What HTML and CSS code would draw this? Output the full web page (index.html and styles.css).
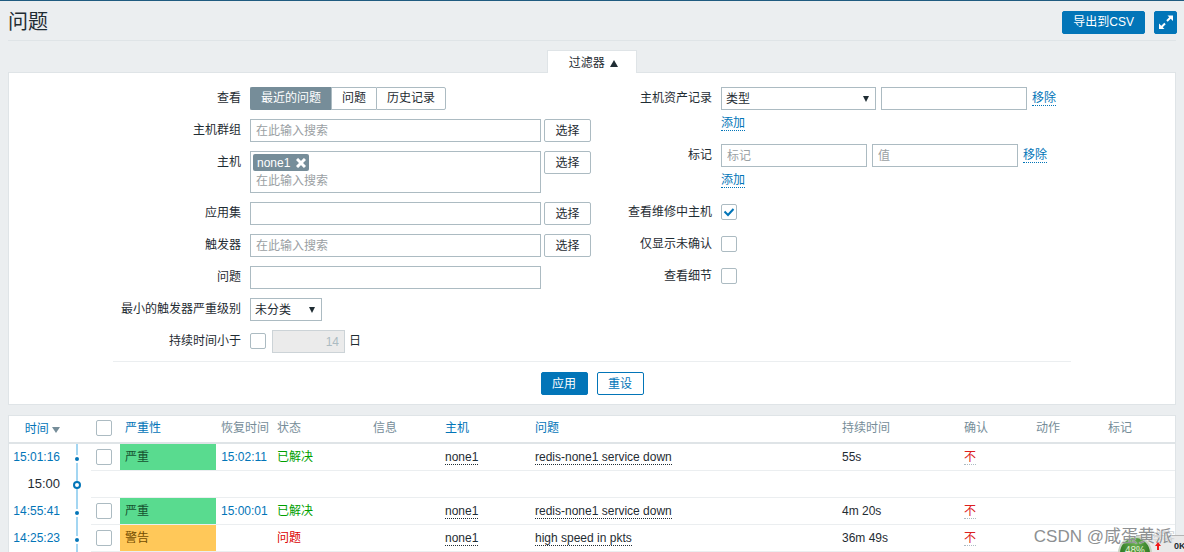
FILE: index.html
```html
<!DOCTYPE html>
<html lang="zh-CN">
<head>
<meta charset="utf-8">
<title>问题</title>
<link rel="stylesheet" href="styles.css">
</head>
<body>
<header class="page-header">
  <h1>问题</h1>
  <div class="header-actions">
    <button type="button" class="btn btn-primary btn-export">导出到CSV</button>
    <button type="button" class="btn btn-primary btn-full" aria-label="全屏">
      <svg width="16" height="16" viewBox="0 0 16 16" fill="none" stroke="#fff" stroke-width="2"><path d="M9 7l4-4M7 9.500l-4 4"/><path d="M9.500 1.500h5.500v5.500zM1 9.500v5.500h5.500z" fill="#fff" stroke="none"/></svg>
    </button>
  </div>
</header>
<main>
  <div class="tab-row"><button type="button" class="filter-tab">过滤器 <span class="tri-up"></span></button></div>
  <form class="filter">
    <div class="filter-body">
      <div class="filter-cols">
        <div class="col col-left">
          <div class="row"><span class="label">查看</span>
            <div class="segmented">
              <label><input type="radio" name="show" checked><span>最近的问题</span></label>
              <label><input type="radio" name="show"><span>问题</span></label>
              <label><input type="radio" name="show"><span>历史记录</span></label>
            </div>
          </div>
          <div class="row"><label class="label" for="groups">主机群组</label><input id="groups" class="text wide" type="text" placeholder="在此输入搜索"><button type="button" class="btn btn-select">选择</button></div>
          <div class="row"><label class="label" for="hosts">主机</label>
            <div class="multi wide"><span class="chip">none1<button type="button" aria-label="移除 none1"><svg width="10" height="10" viewBox="0 0 10 10" stroke="#fff" stroke-width="3"><path d="M1 1l8 8M9 1l-8 8"/></svg></button></span><input id="hosts" type="text" placeholder="在此输入搜索"></div>
            <button type="button" class="btn btn-select">选择</button></div>
          <div class="row"><label class="label" for="app">应用集</label><input id="app" class="text wide" type="text"><button type="button" class="btn btn-select">选择</button></div>
          <div class="row"><label class="label" for="trig">触发器</label><input id="trig" class="text wide" type="text" placeholder="在此输入搜索"><button type="button" class="btn btn-select">选择</button></div>
          <div class="row"><label class="label" for="prob">问题</label><input id="prob" class="text wide" type="text"></div>
          <div class="row"><label class="label" for="sev">最小的触发器严重级别</label><select id="sev" class="select select-sev"><option>未分类</option></select></div>
          <div class="row row-age"><label class="label" for="age">持续时间小于</label><input id="age" class="check" type="checkbox"><input class="text days" type="text" value="14" aria-label="天数" disabled><span class="unit">日</span></div>
        </div>
        <div class="col col-right">
          <div class="row"><label class="label" for="inv">主机资产记录</label>
            <div class="stack">
              <div class="line"><select id="inv" class="select select-inv"><option>类型</option></select><input class="text tag" type="text" aria-label="资产值"><a class="link" href="#">移除</a></div>
              <div class="add"><a class="link" href="#">添加</a></div>
            </div>
          </div>
          <div class="row"><label class="label" for="tag">标记</label>
            <div class="stack">
              <div class="line"><input id="tag" class="text tag" type="text" placeholder="标记"><input class="text tag" type="text" placeholder="值" aria-label="值"><a class="link" href="#">移除</a></div>
              <div class="add"><a class="link" href="#">添加</a></div>
            </div>
          </div>
          <div class="row"><label class="label" for="maint">查看维修中主机</label><input id="maint" class="check" type="checkbox" checked></div>
          <div class="row"><label class="label" for="unack">仅显示未确认</label><input id="unack" class="check" type="checkbox"></div>
          <div class="row"><label class="label" for="details">查看细节</label><input id="details" class="check" type="checkbox"></div>
        </div>
      </div>
      <div class="filter-foot"><button type="button" class="btn btn-primary btn-select">应用</button><button type="reset" class="btn btn-outline btn-select">重设</button></div>
    </div>
  </form>
  <div class="table-card">
    <table>
      <colgroup><col class="c-time"><col class="c-line"><col class="c-check"><col class="c-sev"><col class="c-rec"><col class="c-status"><col class="c-info"><col class="c-host"><col class="c-prob"><col class="c-dur"><col class="c-ack"><col class="c-act"><col class="c-tag"></colgroup>
      <thead><tr>
        <th class="time"><a href="#">时间 <span class="tri-down"></span></a></th><th></th><th><input class="check" type="checkbox" aria-label="全选"></th><th><a href="#">严重性</a></th><th class="rec">恢复时间</th><th>状态</th><th>信息</th><th><a href="#">主机</a></th><th><a href="#">问题</a></th><th>持续时间</th><th>确认</th><th>动作</th><th>标记</th>
      </tr></thead>
      <tbody>
        <tr><td class="time"><a href="#">15:01:16</a></td><td class="rail"><span class="dot"></span></td><td><input class="check" type="checkbox" aria-label="选择 15:01:16"></td><td class="high">严重</td><td class="rec"><a href="#">15:02:11</a></td><td class="ok">已解决</td><td></td><td><a class="dotted" href="#">none1</a></td><td><a class="dotted" href="#">redis-none1 service down</a></td><td>55s</td><td><a class="no" href="#">不</a></td><td></td><td></td></tr>
        <tr><td class="time hour">15:00</td><td class="rail rail-hour"><span class="ring"></span></td><td colspan="11"></td></tr>
        <tr><td class="time"><a href="#">14:55:41</a></td><td class="rail"><span class="dot"></span></td><td><input class="check" type="checkbox" aria-label="选择 14:55:41"></td><td class="high">严重</td><td class="rec"><a href="#">15:00:01</a></td><td class="ok">已解决</td><td></td><td><a class="dotted" href="#">none1</a></td><td><a class="dotted" href="#">redis-none1 service down</a></td><td>4m 20s</td><td><a class="no" href="#">不</a></td><td></td><td></td></tr>
        <tr><td class="time"><a href="#">14:25:23</a></td><td class="rail"><span class="dot"></span></td><td><input class="check" type="checkbox" aria-label="选择 14:25:23"></td><td class="warn">警告</td><td class="rec"></td><td class="bad">问题</td><td></td><td><a class="dotted" href="#">none1</a></td><td><a class="dotted" href="#">high speed in pkts</a></td><td>36m 49s</td><td><a class="no" href="#">不</a></td><td></td><td></td></tr>
      </tbody>
    </table>
  </div>
</main>
<div class="widget"><span class="ball">48%</span><svg width="6" height="8" viewBox="0 0 6 8" fill="#f01818"><path d="M3 0l3 4H4v4H2V4H0z"/></svg><span class="rate">0K</span></div>
<div class="watermark watermark-back">博客</div>
<div class="watermark">CSDN @咸蛋黄派</div>
</body>
</html>
```
FILE: styles.css
```css
* { box-sizing: border-box; }
html { height: 100%; overflow: hidden; }
body {
  margin: 0;
  height: 100%;
  overflow: hidden;
  background: #ebeef0;
  border-top: 1px solid #1f5b80;
  color: #1f2c33;
  font: 12px/16px "Liberation Sans", "Noto Sans CJK SC", sans-serif;
}
button, input, select { font: inherit; color: inherit; margin: 0; }
a { color: #0275b8; text-decoration: none; }
.page-header {
  display: flex;
  justify-content: space-between;
  align-items: center;
  height: 40px;
  margin: 0 8px;
  padding-top: 3px;
  border-bottom: 1px solid #dfe4e7;
}
h1 { margin: 0; font-size: 20px; line-height: 24px; font-weight: 400; }
.header-actions { display: flex; gap: 9px; margin-right: -1px; }
.btn {
  height: 23px;
  padding: 0 11px;
  border: 1px solid #acbbc2;
  border-radius: 2px;
  background: #fff;
  line-height: 16px;
}
.btn-primary { background: #0275b8; border-color: #0275b8; color: #fff; }
.btn-outline { border-color: #0275b8; color: #0275b8; }
.btn-select { width: 47px; padding: 0; }
.btn-export { padding: 0 10px; }
.btn-full { width: 23px; padding: 0; display: grid; place-items: center; }
main { margin: 0 8px; }
.tab-row { display: flex; justify-content: center; padding-top: 9px; }
.filter-tab {
  position: relative;
  height: 23px;
  margin-bottom: -1px;
  padding: 1px 18px 0 21px;
  border: 1px solid #dfe4e7;
  border-bottom: 0;
  background: #fff;
}
.tri-up, .tri-down {
  display: inline-block;
  border: 4px solid transparent;
}
.tri-up { margin-left: 2px; border-top: 0; border-bottom: 7px solid #1f2c33; }
.tri-down { border-bottom: 0; border-top: 6px solid #768d99; }
.filter { background: #fff; border: 1px solid #dfe4e7; padding: 14px 16px 9px; }
.filter-body { max-width: 958px; margin: 0 auto; }
.filter-cols { display: grid; grid-template-columns: 1fr 1fr; padding-bottom: 8px; border-bottom: 1px solid #ebeef0; }
.col { display: flex; flex-direction: column; gap: 9px; }
.row { display: flex; align-items: flex-start; min-height: 23px; }
.label { flex: none; width: 128px; margin-right: 9px; line-height: 23px; text-align: right; white-space: nowrap; }
.col-right .label { width: 120px; }
.text, .select, .multi { height: 23px; border: 1px solid #acbbc2; background: #fff; border-radius: 0; }
.text { padding: 0 5px; }
.wide { width: 291px; margin-right: 3px; }
::placeholder { color: #9aa0a3; opacity: 1; }
.multi { height: 42px; padding: 2px; }
.multi input { display: block; width: 100%; height: 20px; border: 0; padding: 0 3px; background: none; }
.chip { display: flex; width: 56px; height: 17px; align-items: center; justify-content: space-between; padding: 0 3px 0 4px; border-radius: 2px; background: #768d99; color: #fff; }
.chip button { display: flex; border: 0; padding: 0; background: none; }
.segmented { display: flex; }
.segmented label { position: relative; }
.segmented input { position: absolute; opacity: 0; }
.segmented span { display: block; height: 23px; padding: 0 10px; border: 1px solid #acbbc2; border-right-width: 0; line-height: 21px; }
.segmented label:last-child span { border-right-width: 1px; border-radius: 0 2px 2px 0; }
.segmented input:checked + span { background: #768d99; border-color: #768d99; color: #fff; border-radius: 2px 0 0 2px; }
.select {
  appearance: none;
  padding: 0 4px;
  background: #fff url("data:image/svg+xml,%3Csvg xmlns='http://www.w3.org/2000/svg' width='6' height='6'%3E%3Cpath d='M0 0h6L3 6z' fill='%231f2c33'/%3E%3C/svg%3E") no-repeat right 6px center;
}
.select-sev { width: 72px; }
.select-inv { width: 155px; }
.check {
  appearance: none;
  display: block;
  flex: none;
  width: 16px;
  height: 16px;
  border: 1px solid #acbbc2;
  border-radius: 2px;
  background: #fff;
}
.row > .check { margin-top: 3px; }
.check:checked {
  background: #fff url("data:image/svg+xml,%3Csvg xmlns='http://www.w3.org/2000/svg' width='12' height='12'%3E%3Cpath d='M1.500 5.500l3.500 3.500 5.500-6' fill='none' stroke='%230275b8' stroke-width='2'/%3E%3C/svg%3E") no-repeat center;
}
.days { width: 73px; margin: 0 4px 0 6px; text-align: right; background: #ebebeb; border-color: #ccd3d7; color: #acbbc2; }
.unit { line-height: 23px; }
.line { display: flex; align-items: center; gap: 5px; }
.tag { width: 146px; }
.link { border-bottom: 1px dotted #0275b8; line-height: 14px; }
.add { display: flex; align-items: center; height: 25px; padding-top: 1px; }
.filter-foot { display: flex; justify-content: center; gap: 9px; padding-top: 10px; }
.table-card { margin-top: 10px; border: 1px solid #dfe4e7; background: #fff; }
table { width: 100%; border-collapse: separate; border-spacing: 0; table-layout: fixed; }
th, td { height: 27px; padding: 0 5px; border-bottom: 1px solid #ebeef0; text-align: left; font-weight: 400; white-space: nowrap; vertical-align: middle; line-height: 16px; }
th { height: 28px; padding-bottom: 2px; border-bottom: 2px solid #dfe4e7; color: #768d99; }
.c-time { width: 54px; }
.c-line { width: 28px; }
.c-check { width: 29px; }
.c-sev { width: 96px; }
.c-rec { width: 56px; }
.c-status { width: 96px; }
.c-info, .c-ack, .c-act, .c-tag { width: 72px; }
.c-host { width: 90px; }
.c-dur { width: 122px; }
.time, .rec { text-align: right; }
.time { padding: 0 3px 0 0; }
td.time { padding-bottom: 1px; }
td.time, .rail { border-bottom: 0; }
.hour { font-size: 13px; }
.rail { padding: 3px 0 0; background: linear-gradient(#a3d6f2, #a3d6f2) no-repeat center / 2px 100%; }
.rail-hour { padding-top: 0; }
.dot, .ring { display: block; margin: 0 auto; border-radius: 50%; }
.dot { width: 8px; height: 8px; border: 2px solid #fff; background: #0275b8; }
.ring { width: 8px; height: 8px; border: 2px solid #0275b8; background: #fff; }
.high { background: #59db8f; color: #16522f; }
.warn { background: #ffc859; color: #734d00; }
.ok { color: #00a000; }
.bad { color: #dc0000; }
.dotted { color: #1f2c33; border-bottom: 1px dotted #1f2c33; }
.no { color: #dc2020; border-bottom: 1px dotted #acbbc2; }
.widget {
  position: absolute;
  right: 0;
  bottom: -17px;
  display: flex;
  align-items: flex-start;
  width: 66px;
  height: 34px;
  overflow: hidden;
}
.widget svg { flex: none; margin: 7px 13px 0 3px; z-index: 1; }
.widget::before { content: ""; position: absolute; left: 18px; right: 0; top: 0; bottom: 0; border-top: 1px solid #b5b5b5; background: #e9e9e9; }
.ball { position: relative; flex: none; width: 34px; height: 34px; margin-top: 1px; border: 2px solid #c7d3c1; border-radius: 50%; background: radial-gradient(circle at 50% 20%, #67ab4f, #24731b 70%); color: #e2f4d0; font-size: 10px; line-height: 26px; text-align: center; }
.rate { position: relative; font-size: 9px; font-weight: 700; line-height: 23px; }
.watermark { position: absolute; right: 12px; bottom: 3px; color: #8d9092; font-size: 17px; line-height: 24px; white-space: nowrap; text-shadow: 0 0 1px #fff; }
.watermark-back { right: 9px; color: #cfd2d4; font-size: 13px; }
```
